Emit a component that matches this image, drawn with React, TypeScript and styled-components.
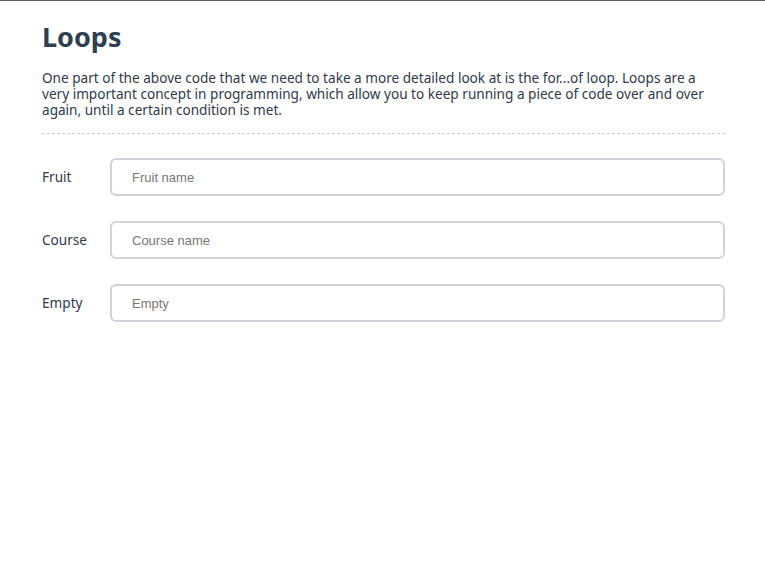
import styled, { createGlobalStyle } from "styled-components";

const GlobalStyle = createGlobalStyle`
	html, body {
		margin: 0;
		padding: 0;
		background: #fff;
	}
	body {
		border-top: 1px solid #5f5f5f;
		font-family: "Noto Sans", "Open Sans", sans-serif;
		color: #2c3e50;
	}
`;

const Page = styled.main`
	padding: 20px 40px 0 42px;
`;

const Title = styled.h1`
	margin: 0 0 17px;
	font-size: 27px;
	line-height: 32px;
	font-weight: 700;
	color: #2f3e50;
`;

const Intro = styled.p`
	margin: 0;
	padding-bottom: 15px;
	font-size: 13.6px;
	line-height: 16px;
	color: #2f3a4a;
	border-bottom: 1px dashed #cfcfcf;
`;

const Form = styled.form`
	display: flex;
	flex-direction: column;
	gap: 25px;
	margin-top: 24px;
`;

const Row = styled.div`
	display: grid;
	grid-template-columns: 68px 1fr;
	align-items: center;
`;

const Label = styled.label`
	font-size: 13.6px;
	color: #2f3a4a;
	padding-bottom: 1px;
`;

const Input = styled.input`
	box-sizing: border-box;
	height: 38px;
	width: 100%;
	padding: 0 20px;
	border: 2px solid #d0d3da;
	border-radius: 6px;
	font-family: "Liberation Sans", Arial, sans-serif;
	font-size: 13px;
	color: #333;
	outline: none;

	&::placeholder {
		color: #767676;
	}
`;

const fields = [
	{ label: "Fruit", placeholder: "Fruit name" },
	{ label: "Course", placeholder: "Course name" },
	{ label: "Empty", placeholder: "Empty" },
];

export default function App() {
	return (
		<>
			<GlobalStyle />
			<Page>
				<Title>Loops</Title>
				<Intro>
					One part of the above code that we need to take a more detailed look at is the
					for...of loop. Loops are a very important concept in programming, which allow you
					to keep running a piece of code over and over again, until a certain condition is
					met.
				</Intro>
				<Form>
					{fields.map((f) => (
						<Row key={f.label}>
							<Label>{f.label}</Label>
							<Input placeholder={f.placeholder} />
						</Row>
					))}
				</Form>
			</Page>
		</>
	);
}
